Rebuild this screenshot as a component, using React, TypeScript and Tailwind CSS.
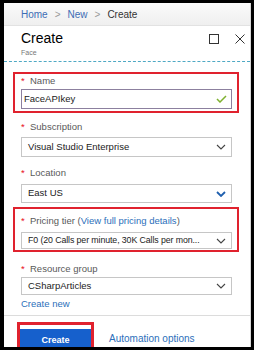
const font = { fontFamily: '"Liberation Sans", Arial, sans-serif' };

function Chevron({ blue = false }: { blue?: boolean }) {
  return (
    <svg width="10" height="6" viewBox="0 0 10 6" className="shrink-0">
      <polyline
        points="1,1 5,5 9,1"
        fill="none"
        stroke={blue ? "#1f5fae" : "#444"}
        strokeWidth={blue ? 1.8 : 1.1}
      />
    </svg>
  );
}

function Label({ text, mt, children }: { text: string; mt: string; children?: React.ReactNode }) {
  return (
    <div className={`flex h-[12px] items-center text-[9.5px] leading-[12px] text-[#595959] ${mt}`}>
      <span className="w-[9px] text-[#e81123]">*</span>
      <span>{text}</span>
      {children}
    </div>
  );
}

function Select({
  value,
  h,
  mt,
  blue = false,
  small = false,
}: {
  value: string;
  h: string;
  mt: string;
  blue?: boolean;
  small?: boolean;
}) {
  return (
    <div
      className={`flex w-[211px] items-center justify-between border border-[#c6c6c6] bg-white pl-[6px] pr-[5px] text-[#222] ${h} ${mt}`}
    >
      <span className={small ? "whitespace-nowrap text-[8.8px] tracking-[-0.1px]" : "whitespace-nowrap text-[9.5px]"}>
        {value}
      </span>
      <Chevron blue={blue} />
    </div>
  );
}

export default function App() {
  return (
    <div className="h-[350px] w-[254px] overflow-hidden bg-black pl-[4px] pr-[3px] pt-[3px]" style={font}>
      <div className="h-[344px] overflow-hidden border-r border-[#d8d8d8] bg-white">
        {/* Breadcrumb */}
        <div className="flex h-[23px] items-center gap-[7px] border-b border-[#e2e2e2] bg-gradient-to-b from-[#fbfbfb] to-[#efefef] pl-[17px] text-[10px]">
          <span className="text-[#3d6db5]">Home</span>
          <span className="text-[#9a9a9a]">&gt;</span>
          <span className="text-[#3d6db5]">New</span>
          <span className="text-[#9a9a9a]">&gt;</span>
          <span className="text-[#333]">Create</span>
        </div>

        {/* Header */}
        <div className="mt-[4px] flex items-start justify-between pl-[17px] pr-[5px]">
          <div>
            <div className="text-[14px] leading-[16px] text-black">Create</div>
            <div className="mt-[2px] text-[7px] leading-[9px] text-[#777]">Face</div>
          </div>
          <div className="mt-[4px] flex items-center gap-[16px]">
            <svg width="10" height="10" viewBox="0 0 10 10">
              <rect x="0.5" y="0.5" width="9" height="9" fill="none" stroke="#333" strokeWidth="1" />
            </svg>
            <svg width="10" height="10" viewBox="0 0 10 10">
              <path d="M0.5 0.5 L9.5 9.5 M9.5 0.5 L0.5 9.5" stroke="#333" strokeWidth="1" />
            </svg>
          </div>
        </div>
        <div className="mt-[4px] border-t border-dashed border-[#4fa9c4]" />

        {/* Name */}
        <div className="ml-[9px] mt-[10px] w-[226px] border-2 border-[#e0222e] pb-[2px] pl-[6px] pr-[5px] pt-[1px]">
          <Label text="Name" mt="" />
          <div className="mt-[2px] flex h-[20px] items-center justify-between border border-[#8c809f] pl-[2px] pr-[4px] text-[9.5px] text-[#222]">
            <span>FaceAPIkey</span>
            <svg width="11" height="8" viewBox="0 0 11 8">
              <path d="M1 4 L4 7 L10 1" fill="none" stroke="#7fb12f" strokeWidth="1.5" />
            </svg>
          </div>
        </div>

        <div className="pl-[17px]">
          <Label text="Subscription" mt="mt-[8px]" />
          <Select value="Visual Studio Enterprise" h="h-[20px]" mt="mt-[4px]" />
          <Label text="Location" mt="mt-[10px]" />
          <Select value="East US" h="h-[19px]" mt="mt-[5px]" blue />
        </div>

        {/* Pricing tier */}
        <div className="ml-[9px] mt-[4px] w-[226px] border-2 border-[#e0222e] pb-[1px] pl-[6px] pr-[5px] pt-[6px]">
          <Label text="Pricing tier (" mt="">
            <span className="text-[#2c6fba]">View full pricing details</span>
            <span>)</span>
          </Label>
          <Select value="F0 (20 Calls per minute, 30K Calls per mon..." h="h-[17px]" mt="mt-[5px]" small />
        </div>

        <div className="pl-[17px]">
          <Label text="Resource group" mt="mt-[11px]" />
          <Select value="CSharpArticles" h="h-[18px]" mt="mt-[2px]" />
          <div className="mt-[3px] text-[9.5px] leading-[12px] text-[#2c6fba]">Create new</div>
        </div>

        <div className="mt-[5px] border-t border-[#dcdcdc]" />

        {/* Footer */}
        <div className="mt-[6px] flex items-start">
          <div className="ml-[13px] w-[77px] border-[3px] border-b-0 border-[#e0222e] bg-white pt-[4px]">
            <div className="flex h-[24px] items-center justify-center bg-[#1660cc] text-[9px] font-bold text-white">
              Create
            </div>
          </div>
          <div className="ml-[15px] mt-[11px] text-[10px] leading-[12px] text-[#2c6fba]">Automation options</div>
        </div>
      </div>
    </div>
  );
}
